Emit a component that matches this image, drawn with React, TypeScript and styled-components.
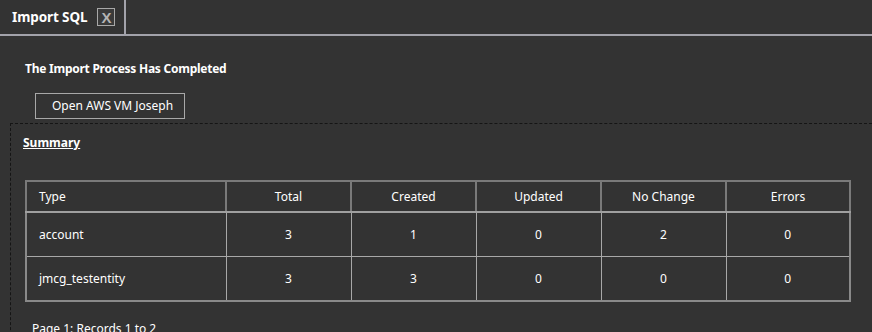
import styled, { createGlobalStyle } from 'styled-components';

const GlobalStyle = createGlobalStyle`
  html, body {
    margin: 0;
    padding: 0;
    background: #333333;
  }
  body {
    font-family: 'Noto Sans', 'Liberation Sans', sans-serif;
    color: #ffffff;
    overflow: hidden;
  }
`;

const Page = styled.div`
  width: 872px;
  height: 332px;
  background: #333333;
  overflow: hidden;
`;

const TabBar = styled.div`
  display: flex;
  height: 34px;
  border-bottom: 2px solid #a2a2aa;
`;

const Tab = styled.div`
  display: flex;
  align-items: center;
  gap: 10px;
  padding: 0 9px 0 12px;
  border-right: 2px solid #a2a2aa;
`;

const TabTitle = styled.span`
  font-size: 13.5px;
  font-weight: 700;
  letter-spacing: -0.1px;
`;

const CloseBox = styled.button`
  width: 18px;
  height: 18px;
  padding: 0;
  display: flex;
  align-items: center;
  justify-content: center;
  background: #3a3a3a;
  border: 1px solid #a8a8a8;
  color: #b4b4b4;
  font-family: 'Liberation Sans', sans-serif;
  font-size: 15px;
  font-weight: 700;
  line-height: 1;
`;

const Body = styled.div`
  padding-top: 25px;
`;

const Heading = styled.div`
  margin-left: 25px;
  font-size: 12px;
  line-height: 16px;
  font-weight: 700;
  letter-spacing: -0.25px;
`;

const ActionButton = styled.button`
  display: block;
  margin: 16px 0 0 35px;
  width: 150px;
  height: 26px;
  padding: 0 0 0 16px;
  text-align: left;
  overflow: hidden;
  white-space: nowrap;
  background: transparent;
  border: 1px solid #a8a8a8;
  color: #ffffff;
  font-family: inherit;
  font-size: 12px;
  line-height: 16px;
`;

const Panel = styled.div`
  margin: 4px 0 0 10px;
  border-top: 1px dashed #151515;
  border-left: 1px dashed #151515;
  padding: 11px 0 0 12px;
  height: 220px;
`;

const SectionTitle = styled.div`
  font-size: 12px;
  line-height: 16px;
  font-weight: 700;
  text-decoration: underline;
`;

const Table = styled.table`
  margin: 29px 0 0 2px;
  width: 824px;
  table-layout: fixed;
  border-collapse: collapse;
  font-size: 12px;
  line-height: 16px;
  border: 2px solid #8a8a8a;
`;

const HeadCell = styled.th<{ $left?: boolean }>`
  height: 29px;
  padding: 0 0 0 ${(p) => (p.$left ? '12px' : '0')};
  text-align: ${(p) => (p.$left ? 'left' : 'center')};
  font-weight: 400;
  border: 2px solid #7a7a7a;
  border-bottom: 2px solid #a0a0a0;
`;

const Cell = styled.td<{ $left?: boolean }>`
  height: 43px;
  padding: 0 0 0 ${(p) => (p.$left ? '12px' : '0')};
  text-align: ${(p) => (p.$left ? 'left' : 'center')};
  border: 1px solid #a8a8a8;
`;

const Pager = styled.div`
  margin: 19px 0 0 9px;
  font-size: 12px;
  line-height: 16px;
`;

const columns = [
  { key: 'type', label: 'Type', w: 200 },
  { key: 'total', label: 'Total', w: 125 },
  { key: 'created', label: 'Created', w: 125 },
  { key: 'updated', label: 'Updated', w: 125 },
  { key: 'noChange', label: 'No Change', w: 125 },
  { key: 'errors', label: 'Errors', w: 124 },
];

const rows = [
  { type: 'account', total: 3, created: 1, updated: 0, noChange: 2, errors: 0 },
  { type: 'jmcg_testentity', total: 3, created: 3, updated: 0, noChange: 0, errors: 0 },
];

const App = () => (
  <Page>
    <GlobalStyle />
    <TabBar>
      <Tab>
        <TabTitle>Import SQL</TabTitle>
        <CloseBox>X</CloseBox>
      </Tab>
    </TabBar>
    <Body>
      <Heading>The Import Process Has Completed</Heading>
      <ActionButton>Open AWS VM Joseph</ActionButton>
      <Panel>
        <SectionTitle>Summary</SectionTitle>
        <Table>
          <colgroup>
            {columns.map((c) => (
              <col key={c.key} style={{ width: c.w }} />
            ))}
          </colgroup>
          <thead>
            <tr>
              {columns.map((c, i) => (
                <HeadCell key={c.key} $left={i === 0}>{c.label}</HeadCell>
              ))}
            </tr>
          </thead>
          <tbody>
            {rows.map((r) => (
              <tr key={r.type}>
                {columns.map((c, i) => (
                  <Cell key={c.key} $left={i === 0}>{r[c.key as keyof typeof r]}</Cell>
                ))}
              </tr>
            ))}
          </tbody>
        </Table>
        <Pager>Page 1: Records 1 to 2</Pager>
      </Panel>
    </Body>
  </Page>
);

export default App;
